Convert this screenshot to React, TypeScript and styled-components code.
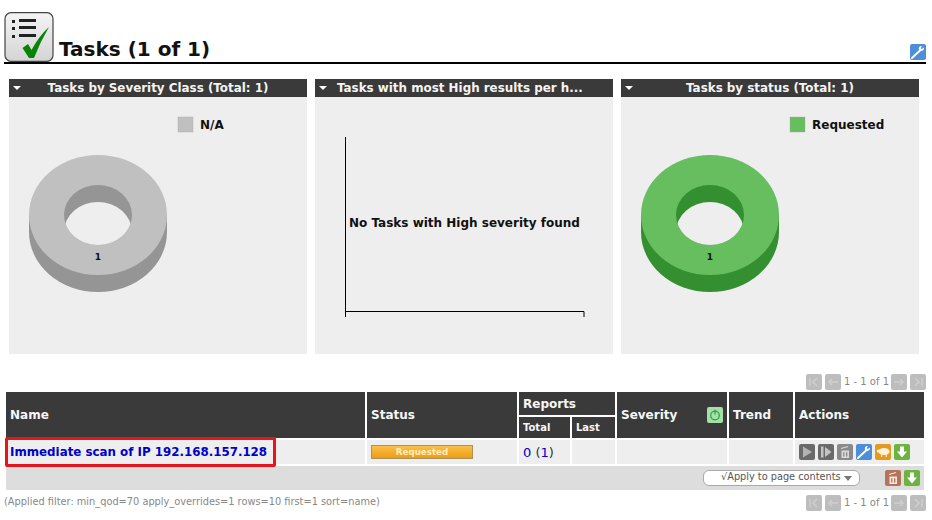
import React from "react";
import styled, { createGlobalStyle } from "styled-components";

const GlobalStyle = createGlobalStyle`
  html, body {
    margin: 0;
    padding: 0;
    background: #fff;
    font-family: "DejaVu Sans", sans-serif;
    overflow: hidden;
  }
`;

const Page = styled.div`
  width: 932px;
  height: 520px;
  padding: 7px 6px 0 4px;
  box-sizing: border-box;
`;

const TitleBar = styled.div`
  display: flex;
  align-items: flex-end;
  justify-content: space-between;
  height: 55px;
  border-bottom: 2px solid #000;
`;

const TitleLeft = styled.div`
  display: flex;
  align-items: flex-end;
  gap: 5px;
`;

const Title = styled.h1`
  margin: 0 0 1px;
  font-size: 20px;
  line-height: 23px;
  font-weight: 700;
  color: #111;
`;

const TitleTool = styled.div`
  display: flex;
  margin-bottom: 2px;
`;

const Charts = styled.div`
  display: flex;
  gap: 8px;
  margin: 15px 0 0 5px;
`;

const ChartPanel = styled.section`
  width: 298px;
  height: 275px;
  background: #eeeeee;
`;

const ChartHead = styled.header<{ $cut?: boolean }>`
  position: relative;
  height: 18px;
  background: #3a3a3a;
  display: flex;
  align-items: center;
  justify-content: ${(p) => (p.$cut ? "flex-start" : "center")};
  padding-left: ${(p) => (p.$cut ? "22px" : "0")};
  color: #f4f4f4;
  font-size: 11.9px;
  font-weight: 700;
  white-space: nowrap;

  &::before {
    content: "";
    position: absolute;
    left: 4px;
    top: 7px;
    border-left: 4px solid transparent;
    border-right: 4px solid transparent;
    border-top: 4px solid #fff;
  }
`;

const ChartSvg = styled.svg`
  display: block;
  font-family: "DejaVu Sans", sans-serif;
`;

const Pager = styled.div`
  display: flex;
  align-items: center;
  justify-content: flex-end;
  gap: 3px;
  height: 16px;
  color: #888;
  font-size: 10px;
`;

const TopPager = styled(Pager)`
  margin-top: 20px;
`;

const BottomPager = styled(Pager)`
  margin-top: 3px;
  flex: 1;
`;

const PagerText = styled.span`
  width: 44px;
  padding-bottom: 2px;
  text-align: center;
  white-space: nowrap;
`;

const TableWrap = styled.div`
  position: relative;
`;

const Table = styled.table`
  border-collapse: separate;
  border-spacing: 2px;
  table-layout: fixed;
  width: 922px;
  font-size: 12px;
`;

const Head = styled.th<{ $small?: boolean }>`
  background: #3a3a3a;
  color: #f6f6f6;
  text-align: left;
  padding: 0 4px;
  font-weight: 700;
  font-size: ${(p) => (p.$small ? "10px" : "12px")};
  height: ${(p) => (p.$small ? "21px" : "23px")};
  box-sizing: border-box;
`;

const SeverityHead = styled.div`
  display: flex;
  align-items: center;
  justify-content: space-between;
`;

const Cell = styled.td`
  background: #eeeeee;
  height: 24px;
  padding: 0 4px;
  box-sizing: border-box;
`;

const NameLink = styled.a`
  color: #0000cc;
  font-weight: 700;
  font-size: 11.85px;
  white-space: nowrap;
`;

const ProgressBar = styled.div`
  width: 102px;
  height: 14px;
  box-sizing: border-box;
  border: 1px solid #a9935a;
  background: linear-gradient(#fbc04a, #ee9c11);
  color: #ffeebc;
  font-size: 8.7px;
  font-weight: 700;
  line-height: 12px;
  text-align: center;
`;

const ReportCount = styled.span`
  font-size: 13px;
  color: #333;

  b {
    font-weight: 400;
    color: #0000cc;
  }
`;

const IconRow = styled.div`
  display: flex;
  gap: 3px;
`;

const FooterRow = styled.td`
  background: #dddddd;
  height: 24px;
  padding: 0;
`;

const FooterInner = styled.div`
  display: flex;
  align-items: center;
  justify-content: flex-end;
  gap: 3px;
  padding-right: 4px;
`;

const ApplySelect = styled.div`
  position: relative;
  width: 157px;
  height: 16px;
  box-sizing: border-box;
  border: 1px solid #aaa;
  border-radius: 6px;
  background: #fff;
  margin-right: 22px;
  color: #555;
  font-size: 9.75px;
  line-height: 12px;
  padding-left: 17px;
  white-space: nowrap;

  &::after {
    content: "";
    position: absolute;
    right: 7px;
    top: 5px;
    border-left: 4px solid transparent;
    border-right: 4px solid transparent;
    border-top: 5px solid #777;
  }
`;

const ScanHighlight = styled.div`
  position: absolute;
  left: 1px;
  top: 47px;
  width: 271px;
  height: 30px;
  box-sizing: border-box;
  border: 3px solid #e8141c;
  border-radius: 2px;
  pointer-events: none;
`;

const FootLine = styled.div`
  display: flex;
  align-items: flex-start;
`;

const FilterText = styled.div`
  color: #888;
  font-size: 9.8px;
  line-height: 12px;
  margin-top: 4px;
  white-space: nowrap;
`;

const TaskIcon = () => (
  <svg width="50" height="50" viewBox="0 0 50 50">
    <defs>
      <linearGradient id="taskBg" x1="0" y1="0" x2="0" y2="1">
        <stop offset="0" stopColor="#f4f4f4" />
        <stop offset="1" stopColor="#d4d4d4" />
      </linearGradient>
    </defs>
    <rect x="1" y="0.7" width="48" height="48.6" rx="6" fill="url(#taskBg)" stroke="#444" strokeWidth="1.2" />
    <rect x="8" y="8" width="3" height="3" fill="#222" />
    <rect x="8" y="15" width="3" height="3" fill="#222" />
    <rect x="8" y="23" width="3" height="3" fill="#222" />
    <rect x="15" y="7" width="17" height="3" fill="#222" />
    <rect x="15" y="14" width="17" height="3" fill="#222" />
    <rect x="15" y="22" width="17" height="3" fill="#222" />
    <path d="M18.5 36 L24 32 L27.5 38 Q35 24 45 15 Q36 30 30 46 L25 46 Z" fill="#078407" />
  </svg>
);

const Base = ({ bg, children }: { bg: string; children?: React.ReactNode }) => (
  <svg width="16" height="16" viewBox="0 0 16 16" style={{ flexShrink: 0 }}>
    <rect width="16" height="16" rx="2" fill={bg} />
    {children}
  </svg>
);

const Wrench = () => (
  <Base bg="#4c8fd8">
    <path d="M2 14 L10 6.5" stroke="#fff" strokeWidth="1.9" strokeLinecap="round" />
    <path d="M14 3.4 L11.6 5 L10.6 4.2 L12 2 Q8.8 1.8 8.8 4.8 Q9 7.2 11.4 6.9 Q14.2 6.4 14 3.4 Z" fill="#fff" />
  </Base>
);

const Play = () => (
  <Base bg="#6a6a6a">
    <path d="M4 2.5 L13 8 L4 13.5 Z" fill="#b4b4b4" />
  </Base>
);

const Resume = () => (
  <Base bg="#6a6a6a">
    <rect x="3" y="2.5" width="2.5" height="11" fill="#c4c4c4" />
    <path d="M7 3 L13.5 8 L7 13 Z" fill="#c4c4c4" />
  </Base>
);

const Trash = ({ bg, fg }: { bg: string; fg: string }) => (
  <Base bg={bg}>
    <path d="M4 4.5 L11 2.5" stroke={fg} strokeWidth="1.2" />
    <path d="M4.5 6.5 H12 V14 H4.5 Z M6.2 8.2 V12.4 H7.4 V8.2 Z M9 8.2 V12.4 H10.3 V8.2 Z" fill={fg} fillRule="evenodd" />
  </Base>
);

const Clone = () => (
  <Base bg="#e49a1e">
    <ellipse cx="9" cy="7.5" rx="5.6" ry="3.6" fill="#fff2d8" />
    <ellipse cx="3.6" cy="7" rx="2" ry="1.6" fill="#fff2d8" />
    <rect x="6" y="10" width="1.2" height="3" fill="#fff2d8" />
    <rect x="10.6" y="10" width="1.2" height="3" fill="#fff2d8" />
  </Base>
);

const Download = () => (
  <Base bg="#6db33f">
    <path d="M6 2.5 H10 V7.5 H13 L8 13.5 L3 7.5 H6 Z" fill="#fff" />
  </Base>
);

const PagerIcon = ({ d }: { d: string }) => (
  <Base bg="#bdbdbd">
    <path d={d} fill="none" stroke="#cecece" strokeWidth="1.6" />
  </Base>
);

const First = () => <PagerIcon d="M4 4 V12 M11 4 L7 8 L11 12" />;
const Prev = () => <PagerIcon d="M13 8 H4 M7 5 L4 8 L7 11" />;
const Next = () => <PagerIcon d="M3 8 H12 M9 5 L12 8 L9 11" />;
const Last = () => <PagerIcon d="M12 4 V12 M5 4 L9 8 L5 12" />;

const PagerButtons = () => (
  <>
    <First />
    <Prev />
    <PagerText>1 - 1 of 1</PagerText>
    <Next />
    <Last />
  </>
);

const PowerIcon = () => (
  <Base bg="#a5e0a5">
    <circle cx="8" cy="8.5" r="4.3" fill="none" stroke="#2e9e4c" strokeWidth="1.2" />
    <path d="M8 2.8 V7.5" stroke="#2e9e4c" strokeWidth="1.2" />
  </Base>
);

const Donut = ({ top, side, label }: { top: string; side: string; label: string }) => {
  const id = `hole-${label}`;
  return (
    <>
      <defs>
        <clipPath id={id}>
          <ellipse cx="89" cy="118" rx="34" ry="30" />
        </clipPath>
      </defs>
      <path d="M20 118 V135 A69 60 0 0 0 158 135 V118 Z" fill={side} />
      <ellipse cx="89" cy="118" rx="69" ry="60" fill={top} />
      <ellipse cx="89" cy="118" rx="34" ry="30" fill={side} />
      <ellipse cx="89" cy="135" rx="34" ry="30" fill="#eeeeee" clipPath={`url(#${id})`} />
      <text x="89" y="163" fontSize="9" fontWeight="700" textAnchor="middle" fill="#111">1</text>
    </>
  );
};

const Legend = ({ x, color, label }: { x: number; color: string; label: string }) => (
  <>
    <rect x={x} y="20" width="15" height="15" fill={color} stroke="#aaa" strokeOpacity="0.4" />
    <text x={x + 22} y="32" fontSize="12" fontWeight="700" fill="#111">{label}</text>
  </>
);

const SeverityChart = () => (
  <ChartSvg width="298" height="257">
    <Legend x={169} color="#c0c0c0" label="N/A" />
    <Donut top="#c0c0c0" side="#959595" label="na" />
  </ChartSvg>
);

const HighResultsChart = () => (
  <ChartSvg width="298" height="257">
    <path d="M30.5 40 V220 M30.5 214.5 H269 V220" fill="none" stroke="#000" />
    <text x="34" y="130" fontSize="12" fontWeight="700" fill="#111">No Tasks with High severity found</text>
  </ChartSvg>
);

const StatusChart = () => (
  <ChartSvg width="298" height="257">
    <Legend x={169} color="#66be5e" label="Requested" />
    <Donut top="#66be5e" side="#338f30" label="req" />
  </ChartSvg>
);

export default function App() {
  return (
    <Page>
      <GlobalStyle />
      <TitleBar>
        <TitleLeft>
          <TaskIcon />
          <Title>Tasks (1 of 1)</Title>
        </TitleLeft>
        <TitleTool>
          <Wrench />
        </TitleTool>
      </TitleBar>

      <Charts>
        <ChartPanel>
          <ChartHead>Tasks by Severity Class (Total: 1)</ChartHead>
          <SeverityChart />
        </ChartPanel>
        <ChartPanel>
          <ChartHead $cut>Tasks with most High results per h...</ChartHead>
          <HighResultsChart />
        </ChartPanel>
        <ChartPanel>
          <ChartHead>Tasks by status (Total: 1)</ChartHead>
          <StatusChart />
        </ChartPanel>
      </Charts>

      <TopPager>
        <PagerButtons />
      </TopPager>

      <TableWrap>
        <Table>
          <colgroup>
            <col style={{ width: 359 }} />
            <col style={{ width: 150 }} />
            <col style={{ width: 51 }} />
            <col style={{ width: 43 }} />
            <col style={{ width: 110 }} />
            <col style={{ width: 64 }} />
            <col style={{ width: 129 }} />
          </colgroup>
          <thead>
            <tr>
              <Head rowSpan={2}>Name</Head>
              <Head rowSpan={2}>Status</Head>
              <Head colSpan={2}>Reports</Head>
              <Head rowSpan={2}>
                <SeverityHead>
                  Severity
                  <PowerIcon />
                </SeverityHead>
              </Head>
              <Head rowSpan={2}>Trend</Head>
              <Head rowSpan={2}>Actions</Head>
            </tr>
            <tr>
              <Head $small>Total</Head>
              <Head $small>Last</Head>
            </tr>
          </thead>
          <tbody>
            <tr>
              <Cell>
                <NameLink>Immediate scan of IP 192.168.157.128</NameLink>
              </Cell>
              <Cell>
                <ProgressBar>Requested</ProgressBar>
              </Cell>
              <Cell>
                <ReportCount>
                  <b>0</b> (<b>1</b>)
                </ReportCount>
              </Cell>
              <Cell />
              <Cell />
              <Cell />
              <Cell>
                <IconRow>
                  <Play />
                  <Resume />
                  <Trash bg="#8a8a8a" fg="#d8d8d8" />
                  <Wrench />
                  <Clone />
                  <Download />
                </IconRow>
              </Cell>
            </tr>
            <tr>
              <FooterRow colSpan={7}>
                <FooterInner>
                  <ApplySelect>√Apply to page contents</ApplySelect>
                  <Trash bg="#b5735a" fg="#f3e5dc" />
                  <Download />
                </FooterInner>
              </FooterRow>
            </tr>
          </tbody>
        </Table>
        <ScanHighlight />
      </TableWrap>

      <FootLine>
        <FilterText>(Applied filter: min_qod=70 apply_overrides=1 rows=10 first=1 sort=name)</FilterText>
        <BottomPager>
          <PagerButtons />
        </BottomPager>
      </FootLine>
    </Page>
  );
}
